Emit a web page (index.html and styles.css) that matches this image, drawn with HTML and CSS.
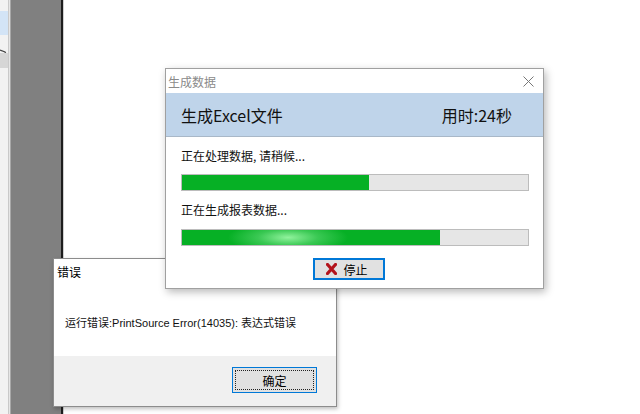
FILE: index.html
```html
<!DOCTYPE html>
<html lang="zh-CN">
<head>
<meta charset="utf-8">
<link rel="stylesheet" href="styles.css">
</head>
<body>
<div class="desktop">
  <div class="side-strip">
    <div class="strip-blue"></div>
    <div class="strip-chevron">
      <svg width="8" height="10" viewBox="0 0 8 10"><path d="M0 2 L5 4 L7 8" fill="none" stroke="#444" stroke-width="1.3"/></svg>
    </div>
    <div class="strip-gray"></div>
  </div>
  <div class="side-gap"></div>
  <div class="gray-panel"></div>
  <div class="panel-edge"></div>
  <div class="work-area"></div>

  <div class="win err-win">
    <div class="err-title">错误</div>
    <div class="err-body">运行错误:PrintSource Error(14035): 表达式错误</div>
    <div class="err-foot">
      <button class="btn ok-btn"><span class="focus">确定</span></button>
    </div>
  </div>

  <div class="win prog-win">
    <div class="prog-title">
      <span>生成数据</span>
      <svg class="close" width="11" height="11" viewBox="0 0 11 11"><path d="M0.5 0.5 L10.5 10.5 M10.5 0.5 L0.5 10.5" stroke="#777" stroke-width="1"/></svg>
    </div>
    <div class="prog-head">
      <span>生成Excel文件</span>
      <span>用时:24秒</span>
    </div>
    <div class="prog-body">
      <div class="label">正在处理数据, 请稍候...</div>
      <div class="bar"><div class="fill" style="width:54%"></div></div>
      <div class="label label2">正在生成报表数据...</div>
      <div class="bar"><div class="fill shine" style="width:74.5%"></div></div>
      <div class="btn-row">
        <button class="btn stop-btn">
          <svg width="11" height="12" viewBox="0 0 11 12"><path d="M1.5 1.5 L9.5 10.5 M9.5 1.5 L1.5 10.5" stroke="#b3131b" stroke-width="3.2" stroke-linecap="round"/></svg>
          <span>停止</span>
        </button>
      </div>
    </div>
  </div>
</div>
</body>
</html>
```

FILE: styles.css
```css
* { box-sizing: border-box; }
html, body { margin: 0; padding: 0; }
body {
  width: 640px;
  height: 414px;
  overflow: hidden;
  font-family: "Microsoft YaHei", "Noto Sans CJK SC", sans-serif;
  background: #fff;
}
.desktop {
  position: relative;
  width: 640px;
  height: 414px;
  display: flex;
}
.side-strip {
  width: 9px;
  background: #f2f2f2;
  border-right: 1px solid #c9c9c9;
  display: flex;
  flex-direction: column;
}
.strip-blue { height: 24px; margin-top: 11px; background: #d3e4f6; }
.strip-chevron { height: 18px; padding-top: 4px; }
.strip-gray { height: 15px; background: #d6d6d6; }
.side-gap { width: 2px; background: #e6e6e6; border-right: 1px solid #a8a8a8; }
.gray-panel { width: 50px; background: #808080; }
.panel-edge { width: 3px; background: #1e1e1e; border-right: 1px solid #d0d0d0; }
.work-area { flex: 1; background: #fff; }

.win { position: absolute; background: #fff; }

.err-win {
  left: 53px; top: 258px;
  width: 284px; height: 149px;
  border: 1px solid #8c8c8c;
  box-shadow: 1px 2px 4px rgba(0,0,0,0.25);
  display: flex; flex-direction: column;
}
.err-title {
  font-size: 12px; color: #000;
  padding: 4px 0 0 3px; height: 40px;
}
.err-body {
  font-family: "Liberation Sans", "Noto Sans CJK SC", sans-serif;
  font-size: 11px; color: #111;
  padding-left: 11px; height: 57px; padding-top: 15px;
}
.err-foot {
  flex: 1; background: #f0f0f0;
  display: flex; justify-content: flex-end; align-items: flex-start;
  padding: 11px 19px 0 0;
}
.btn {
  font-family: inherit; font-size: 12px; color: #000;
  background: #e1e1e1; margin: 0; cursor: default;
}
.ok-btn {
  width: 85px; height: 26px;
  border: 1px solid #0078d7;
  padding: 2px;
}
.ok-btn .focus {
  display: flex; align-items: center; justify-content: center;
  width: 100%; height: 100%;
  border: 1px dotted #222;
}

.prog-win {
  left: 165px; top: 68px;
  width: 379px; height: 221px;
  border: 1px solid #a0a0a0;
  box-shadow: 2px 3px 8px rgba(0,0,0,0.28);
  display: flex; flex-direction: column;
}
.prog-title {
  height: 24px;
  display: flex; align-items: center; justify-content: space-between;
  padding: 0 9px 0 2px;
  font-size: 12px; color: #8a8a8a;
}
.prog-head {
  height: 44px;
  background: #bfd4ea;
  border-bottom: 1px solid #a9b8c8;
  display: flex; align-items: center; justify-content: space-between;
  padding: 0 31px 0 15px;
  font-size: 16px; color: #111;
}
.prog-body {
  padding: 11px 14px 0 15px;
  display: flex; flex-direction: column;
}
.label { font-size: 12px; color: #111; height: 16px; line-height: 16px; margin-bottom: 10px; }
.label2 { margin-top: 11px; margin-bottom: 11px; }
.bar {
  height: 17px; width: 348px;
  background: #e6e6e6;
  border: 1px solid #bcbcbc;
}
.fill { height: 100%; background: #06b025; }
.shine {
  background:
    radial-gradient(ellipse 60px 16px at 106px 50%, rgba(160,250,170,0.9), rgba(110,225,130,0.5) 50%, rgba(6,176,37,0) 100%),
    #06b025;
}
.btn-row { display: flex; padding-left: 132px; margin-top: 12px; }
.stop-btn {
  width: 72px; height: 22px;
  border: 2px solid #0078d7;
  display: flex; align-items: center; justify-content: center; gap: 6px;
  padding: 0 4px 0 0;
  font-size: 12px;
}
```
